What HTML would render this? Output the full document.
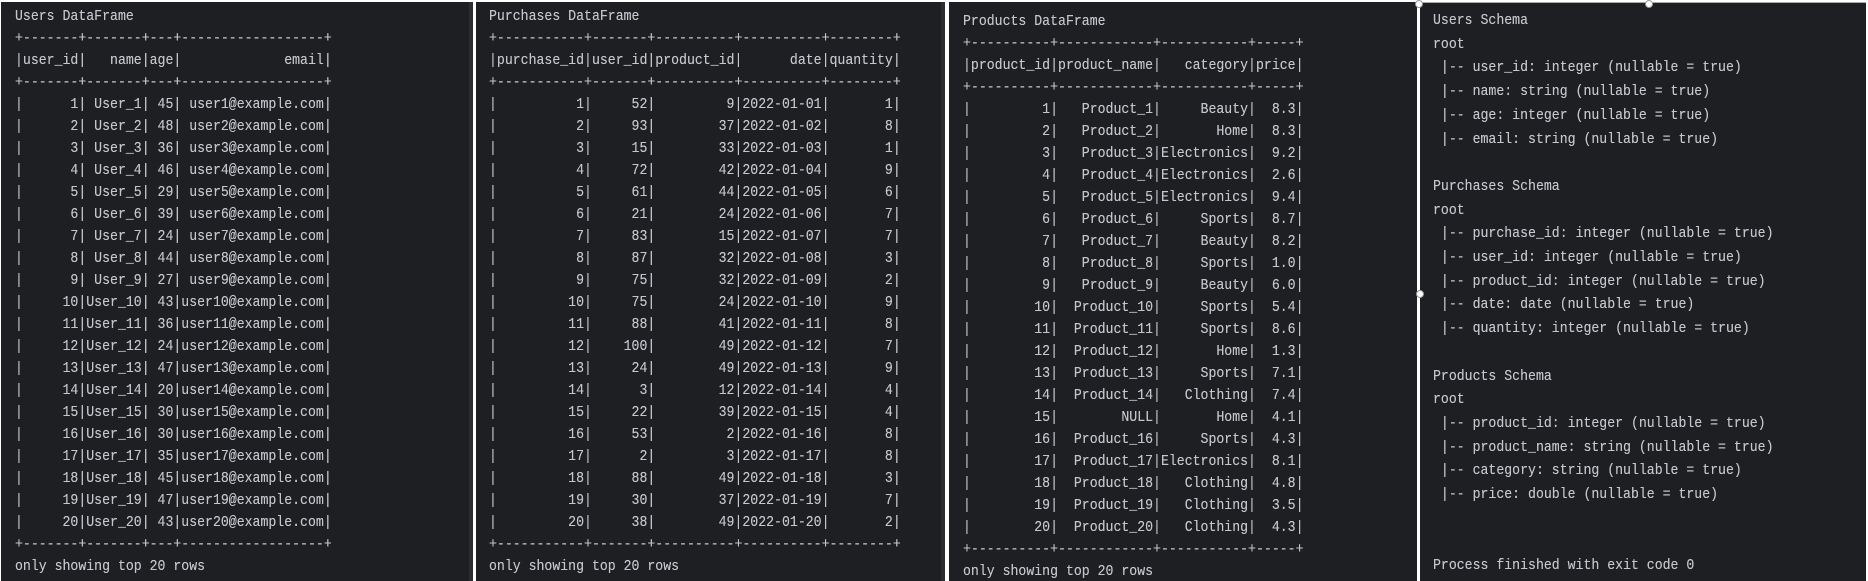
<!DOCTYPE html>
<html><head><meta charset="utf-8">
<style>
html,body{margin:0;padding:0;background:#fff;width:1868px;height:581px;overflow:hidden;position:relative}
.p{position:absolute;top:2px;height:579px;background:#1e1f22;}
pre{position:absolute;margin:0;font-family:"Liberation Mono",monospace;font-size:14.5px;color:#c4c6cc;white-space:pre;transform:scaleX(0.91);transform-origin:0 0;text-shadow:0 0 0.3px #c4c6cc}
.h{position:absolute;width:8px;height:8px;border-radius:50%;background:#fff;border:1px solid #999;box-sizing:border-box}
</style></head><body>
<div class="p" style="left:1px;width:468px"></div>
<div class="p" style="left:469px;width:4px;background:#2b2d30"></div>
<div class="p" style="left:476px;width:465px"></div>
<div class="p" style="left:941px;width:4px;background:#2b2d30"></div>
<div class="p" style="left:949px;width:468px"></div>
<div class="p" style="left:1420px;width:446px;top:2px;border-top:1px solid #aaa"></div>
<div class="h" style="left:1415px;top:0px"></div>
<div class="h" style="left:1645px;top:0px"></div>
<div class="h" style="left:1416px;top:290px"></div>

<pre style="left:15px;top:6px;line-height:22px">Users DataFrame
+-------+-------+---+------------------+
|user_id|   name|age|             email|
+-------+-------+---+------------------+
|      1| User_1| 45| user1@example.com|
|      2| User_2| 48| user2@example.com|
|      3| User_3| 36| user3@example.com|
|      4| User_4| 46| user4@example.com|
|      5| User_5| 29| user5@example.com|
|      6| User_6| 39| user6@example.com|
|      7| User_7| 24| user7@example.com|
|      8| User_8| 44| user8@example.com|
|      9| User_9| 27| user9@example.com|
|     10|User_10| 43|user10@example.com|
|     11|User_11| 36|user11@example.com|
|     12|User_12| 24|user12@example.com|
|     13|User_13| 47|user13@example.com|
|     14|User_14| 20|user14@example.com|
|     15|User_15| 30|user15@example.com|
|     16|User_16| 30|user16@example.com|
|     17|User_17| 35|user17@example.com|
|     18|User_18| 45|user18@example.com|
|     19|User_19| 47|user19@example.com|
|     20|User_20| 43|user20@example.com|
+-------+-------+---+------------------+
only showing top 20 rows</pre>

<pre style="left:489px;top:6px;line-height:22px">Purchases DataFrame
+-----------+-------+----------+----------+--------+
|purchase_id|user_id|product_id|      date|quantity|
+-----------+-------+----------+----------+--------+
|          1|     52|         9|2022-01-01|       1|
|          2|     93|        37|2022-01-02|       8|
|          3|     15|        33|2022-01-03|       1|
|          4|     72|        42|2022-01-04|       9|
|          5|     61|        44|2022-01-05|       6|
|          6|     21|        24|2022-01-06|       7|
|          7|     83|        15|2022-01-07|       7|
|          8|     87|        32|2022-01-08|       3|
|          9|     75|        32|2022-01-09|       2|
|         10|     75|        24|2022-01-10|       9|
|         11|     88|        41|2022-01-11|       8|
|         12|    100|        49|2022-01-12|       7|
|         13|     24|        49|2022-01-13|       9|
|         14|      3|        12|2022-01-14|       4|
|         15|     22|        39|2022-01-15|       4|
|         16|     53|         2|2022-01-16|       8|
|         17|      2|         3|2022-01-17|       8|
|         18|     88|        49|2022-01-18|       3|
|         19|     30|        37|2022-01-19|       7|
|         20|     38|        49|2022-01-20|       2|
+-----------+-------+----------+----------+--------+
only showing top 20 rows</pre>

<pre style="left:963px;top:11px;line-height:22px">Products DataFrame
+----------+------------+-----------+-----+
|product_id|product_name|   category|price|
+----------+------------+-----------+-----+
|         1|   Product_1|     Beauty|  8.3|
|         2|   Product_2|       Home|  8.3|
|         3|   Product_3|Electronics|  9.2|
|         4|   Product_4|Electronics|  2.6|
|         5|   Product_5|Electronics|  9.4|
|         6|   Product_6|     Sports|  8.7|
|         7|   Product_7|     Beauty|  8.2|
|         8|   Product_8|     Sports|  1.0|
|         9|   Product_9|     Beauty|  6.0|
|        10|  Product_10|     Sports|  5.4|
|        11|  Product_11|     Sports|  8.6|
|        12|  Product_12|       Home|  1.3|
|        13|  Product_13|     Sports|  7.1|
|        14|  Product_14|   Clothing|  7.4|
|        15|        NULL|       Home|  4.1|
|        16|  Product_16|     Sports|  4.3|
|        17|  Product_17|Electronics|  8.1|
|        18|  Product_18|   Clothing|  4.8|
|        19|  Product_19|   Clothing|  3.5|
|        20|  Product_20|   Clothing|  4.3|
+----------+------------+-----------+-----+
only showing top 20 rows</pre>

<pre style="left:1433px;top:10px;line-height:23.7px">Users Schema
root
 |-- user_id: integer (nullable = true)
 |-- name: string (nullable = true)
 |-- age: integer (nullable = true)
 |-- email: string (nullable = true)

Purchases Schema
root
 |-- purchase_id: integer (nullable = true)
 |-- user_id: integer (nullable = true)
 |-- product_id: integer (nullable = true)
 |-- date: date (nullable = true)
 |-- quantity: integer (nullable = true)

Products Schema
root
 |-- product_id: integer (nullable = true)
 |-- product_name: string (nullable = true)
 |-- category: string (nullable = true)
 |-- price: double (nullable = true)


Process finished with exit code 0</pre>
</body></html>
